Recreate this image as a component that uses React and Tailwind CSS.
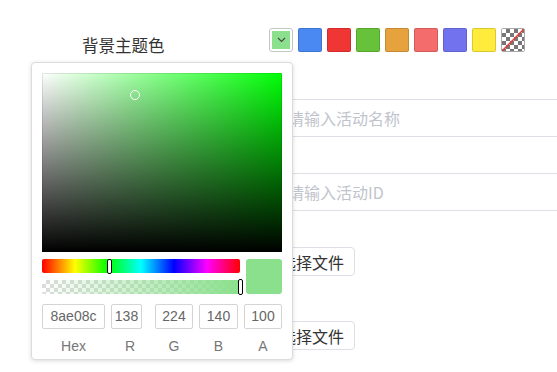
export default function App() {
  const swatches = ['#4a88f2', '#f03535', '#67c23a', '#e6a23c', '#f56c6c', '#7272ee', '#ffeb3b'];
  const checker = [];
  for (let r = 0; r < 6; r++) {
    for (let c = 0; c < 6; c++) {
      if ((r + c) % 2 === 1) checker.push(<rect key={`${r}-${c}`} x={c * 4} y={r * 4} width="4" height="4" fill="#777" />);
    }
  }
  return (
    <div className="relative w-[557px] h-[372px] overflow-hidden bg-white font-['Noto_Sans_CJK_SC','Liberation_Sans',sans-serif] text-[16px] text-[#333]">
      <div className="flex items-start pt-[28px] h-[52px] box-content">
        <div className="w-[269px] pl-[82px] pt-[5px] leading-[24px] text-[16.5px]">背景主题色</div>
        <div className="flex gap-[5px]">
          <div className="relative">
            <div className="w-[24px] h-[24px] border border-[#c4c4c4] rounded-[3px] bg-white p-[2px]">
              <div className="w-full h-full bg-[#8ae08c] flex items-center justify-center">
                <svg width="9" height="6" viewBox="0 0 9 6"><path d="M1 1 L4.5 4.5 L8 1" fill="none" stroke="#4a4a4a" strokeWidth="1.2" /></svg>
              </div>
            </div>
            <div className="absolute right-0 top-[34px] z-10 w-[262px] h-[298px] bg-white border border-[#dcdcdc] rounded-[4px] shadow-[0_1px_4px_rgba(0,0,0,0.15)] p-[10px] font-['Liberation_Sans',sans-serif]">
              <div className="relative w-[240px] h-[179px] bg-[#00ff06] rounded-[1px]">
                <div className="absolute inset-0 bg-[image:linear-gradient(to_right,#fff,rgba(255,255,255,0))]" />
                <div className="absolute inset-0 bg-[image:linear-gradient(to_top,#000,rgba(0,0,0,0))]" />
                <div className="absolute inset-0 border border-black/10" />
                <div className="absolute left-[88px] top-[17px] w-[10px] h-[10px] rounded-full border border-white" />
              </div>
              <div className="flex mt-[7px] gap-[6px]">
                <div className="w-[198px] flex flex-col gap-[7px]">
                  <div className="relative h-[14px] rounded-[2px] bg-[image:linear-gradient(to_right,#f00,#ff0,#0f0,#0ff,#00f,#f0f,#f00)]">
                    <div className="absolute left-[65px] top-0 w-[5px] h-[15px] bg-white border border-black rounded-[2px]" />
                  </div>
                  <div className="relative h-[14px] rounded-[2px] bg-[image:repeating-conic-gradient(#dcdcdc_0_25%,#fff_0_50%)] bg-[length:8px_8px]">
                    <div className="absolute inset-0 rounded-[2px] bg-[image:linear-gradient(to_right,rgba(138,224,140,0),#8ae08c)]" />
                    <div className="absolute left-[196px] top-[-1px] w-[5px] h-[16px] bg-white border border-black rounded-[2px]" />
                  </div>
                </div>
                <div className="w-[36px] h-[35px] rounded-[3px] bg-[#8ae08c]" />
              </div>
              <div className="flex gap-[6px] mt-[10px]">
                {[
                  ['8ae08c', 'Hex', 'w-[63px]', 'w-[63px]'],
                  ['138', 'R', 'w-[38px]', 'w-[31px]'],
                  ['224', 'G', 'w-[38px]', 'w-[38px]'],
                  ['140', 'B', 'w-[39px]', 'w-[39px]'],
                  ['100', 'A', 'w-[38px]', 'w-[38px]'],
                ].map(([v, l, cw, iw]) => (
                  <div key={l} className={`${cw} flex flex-col`}>
                    <div className={`${iw} h-[25px] border border-[#d4d4d4] rounded-[2px] flex items-center justify-center text-[14px] text-[#666]`}>{v}</div>
                    <div className="mt-[7px] leading-[20px] text-center text-[14px] text-[#777]">{l}</div>
                  </div>
                ))}
              </div>
            </div>
          </div>
          {swatches.map((c) => (
            <div key={c} className="w-[24px] h-[24px] rounded-[2px] border border-black/15" style={{ backgroundColor: c }} />
          ))}
          <div className="w-[24px] h-[24px] rounded-[2px] border border-[#aaa] overflow-hidden">
            <svg width="22" height="22" viewBox="0 0 22 22">
              <rect width="22" height="22" fill="#fff" />
              {checker}
              <line x1="0" y1="22" x2="22" y2="0" stroke="#e53935" strokeWidth="1.5" />
            </svg>
          </div>
        </div>
      </div>

      <div className="pl-[269px] mt-[19px]">
        <div className="w-[320px] h-[38px] border border-[#dcdfe6] rounded-[4px] pl-[18px] flex items-center text-[#c0c4cc]">请输入活动名称</div>
      </div>
      <div className="pl-[269px] mt-[36px]">
        <div className="w-[320px] h-[38px] border border-[#dcdfe6] rounded-[4px] pl-[18px] flex items-center text-[#c0c4cc]">请输入活动ID</div>
      </div>
      <div className="pl-[269px] mt-[36px]">
        <div className="w-[86px] h-[29px] border border-[#dcdfe6] rounded-[4px] flex items-center justify-center text-[#333]">选择文件</div>
      </div>
      <div className="pl-[269px] mt-[45px]">
        <div className="w-[86px] h-[29px] border border-[#dcdfe6] rounded-[4px] flex items-center justify-center text-[#333]">选择文件</div>
      </div>
    </div>
  );
}
